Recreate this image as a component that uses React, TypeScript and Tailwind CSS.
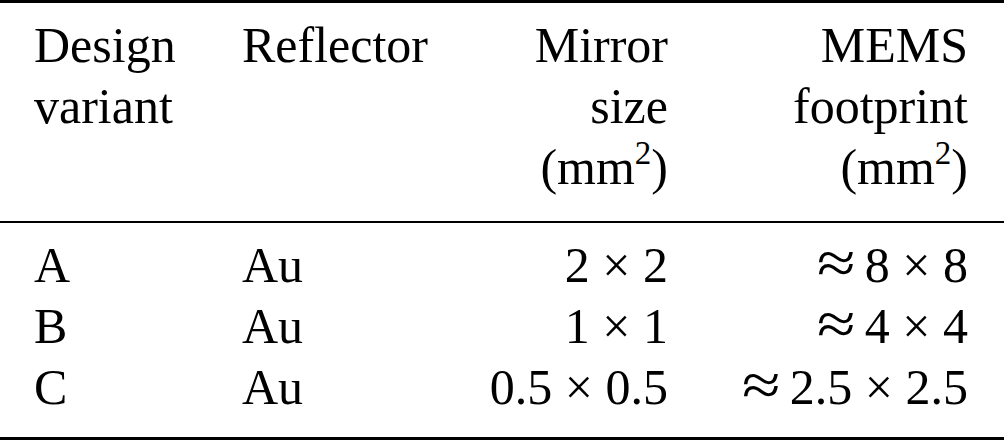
import React from 'react';

const Times = ({ a, b, approx = false }: { a: string; b: string; approx?: boolean }) => (
  <span className="whitespace-nowrap">
    {approx && (
      <span className="inline-block origin-left scale-x-[1.4] scale-y-[1.2] -translate-y-[2px] mr-[20px]">≈</span>
    )}
    {a}
    <span className="mx-[0.25em]">×</span>
    {b}
  </span>
);

const Mm2 = () => (
  <span>
    (mm<sup className="text-[0.66em] top-[-0.62em]">2</sup>)
  </span>
);

const rows = [
  { variant: 'A', reflector: 'Au', mirror: ['2', '2'], footprint: ['8', '8'] },
  { variant: 'B', reflector: 'Au', mirror: ['1', '1'], footprint: ['4', '4'] },
  { variant: 'C', reflector: 'Au', mirror: ['0.5', '0.5'], footprint: ['2.5', '2.5'] },
];

const cols = 'grid grid-cols-[208px_200px_226px_300px] pl-[34px] pr-[36px]';

export default function App() {
  return (
    <div className="w-[1004px] h-[440px] bg-white text-black font-['Liberation_Serif','Times_New_Roman',serif] text-[50px] leading-[61px]">
      <div className={`${cols} border-t-[3px] border-black pt-[12px] pb-[23px]`}>
        <div>
          Design
          <br />
          variant
        </div>
        <div>Reflector</div>
        <div className="text-right">
          Mirror
          <br />
          size
          <br />
          <Mm2 />
        </div>
        <div className="text-right">
          MEMS
          <br />
          footprint
          <br />
          <Mm2 />
        </div>
      </div>
      <div className={`${cols} border-t-2 border-b-[3px] border-black pt-[12px] pb-[19px]`}>
        {rows.map((r) => (
          <React.Fragment key={r.variant}>
            <div>{r.variant}</div>
            <div>{r.reflector}</div>
            <div className="text-right">
              <Times a={r.mirror[0]} b={r.mirror[1]} />
            </div>
            <div className="text-right">
              <Times a={r.footprint[0]} b={r.footprint[1]} approx />
            </div>
          </React.Fragment>
        ))}
      </div>
    </div>
  );
}
